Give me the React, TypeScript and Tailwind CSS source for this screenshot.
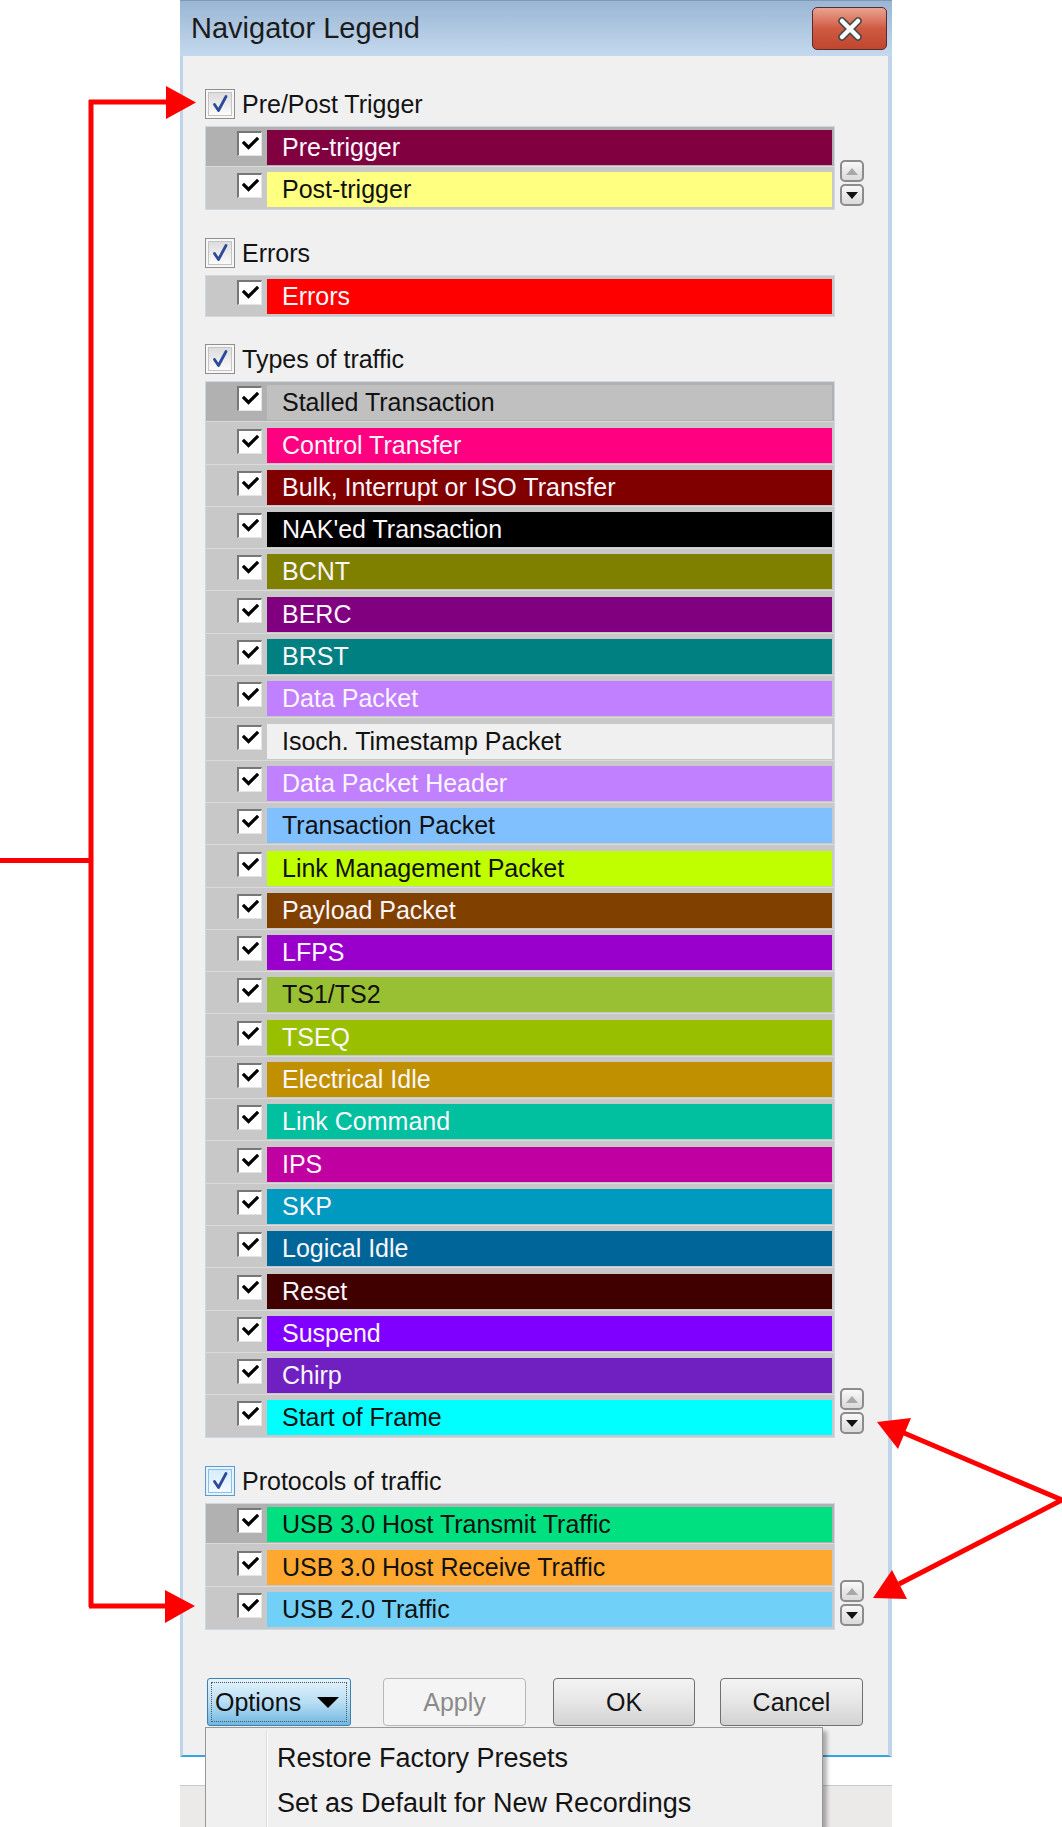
import React from "react";

type Item = { label: string; bg: string; fg: string };

const W = "text-[#fbf6fb]";
const B = "text-[#111111]";

const prePost: Item[] = [
  { label: "Pre-trigger", bg: "bg-[#800040]", fg: W },
  { label: "Post-trigger", bg: "bg-[#ffff80]", fg: B },
];

const errors: Item[] = [{ label: "Errors", bg: "bg-[#ff0000]", fg: W }];

const types: Item[] = [
  { label: "Stalled Transaction", bg: "bg-[#c0c0c0]", fg: B },
  { label: "Control Transfer", bg: "bg-[#ff0080]", fg: W },
  { label: "Bulk, Interrupt or ISO Transfer", bg: "bg-[#800000]", fg: W },
  { label: "NAK'ed Transaction", bg: "bg-[#000000]", fg: W },
  { label: "BCNT", bg: "bg-[#808000]", fg: W },
  { label: "BERC", bg: "bg-[#800080]", fg: W },
  { label: "BRST", bg: "bg-[#008080]", fg: W },
  { label: "Data Packet", bg: "bg-[#c080ff]", fg: W },
  { label: "Isoch. Timestamp Packet", bg: "bg-[#f0f0f0]", fg: B },
  { label: "Data Packet Header", bg: "bg-[#c080ff]", fg: W },
  { label: "Transaction Packet", bg: "bg-[#80c0ff]", fg: B },
  { label: "Link Management Packet", bg: "bg-[#c0ff00]", fg: B },
  { label: "Payload Packet", bg: "bg-[#804000]", fg: W },
  { label: "LFPS", bg: "bg-[#9900cc]", fg: W },
  { label: "TS1/TS2", bg: "bg-[#99c033]", fg: B },
  { label: "TSEQ", bg: "bg-[#99c000]", fg: W },
  { label: "Electrical Idle", bg: "bg-[#c09000]", fg: W },
  { label: "Link Command", bg: "bg-[#00c0a0]", fg: W },
  { label: "IPS", bg: "bg-[#c000a0]", fg: W },
  { label: "SKP", bg: "bg-[#0099c0]", fg: W },
  { label: "Logical Idle", bg: "bg-[#006699]", fg: W },
  { label: "Reset", bg: "bg-[#400000]", fg: W },
  { label: "Suspend", bg: "bg-[#8000ff]", fg: W },
  { label: "Chirp", bg: "bg-[#7020c0]", fg: W },
  { label: "Start of Frame", bg: "bg-[#00ffff]", fg: B },
];

const protocols: Item[] = [
  { label: "USB 3.0 Host Transmit Traffic", bg: "bg-[#00e080]", fg: B },
  { label: "USB 3.0 Host Receive Traffic", bg: "bg-[#ffa830]", fg: B },
  { label: "USB 2.0 Traffic", bg: "bg-[#70d0f8]", fg: B },
];

function SmallCheck() {
  return (
    <div className="ml-[31px] mt-px flex h-[25px] w-[25px] shrink-0 items-start justify-center border-b border-l-2 border-r border-t-2 border-b-[#e4e4e4] border-l-[#777777] border-r-[#e4e4e4] border-t-[#777777] bg-white pt-[4px]">
      <svg width="17" height="13" viewBox="0 0 17 13">
        <path d="M2 6 L6.5 10.5 L15 2" stroke="#000" strokeWidth="3.2" fill="none" strokeLinecap="square" />
      </svg>
    </div>
  );
}

function HeaderCheck({ hover }: { hover?: boolean }) {
  return (
    <div
      className={`flex h-[30px] w-[30px] items-center justify-center border p-[2px] ${
        hover ? "border-[#5b9bd5] bg-[#e8f4fc]" : "border-[#8f8f8f] bg-[#f7f7f7]"
      }`}
    >
      <div
        className={`flex h-full w-full items-center justify-center border bg-linear-to-b ${
          hover ? "border-[#8cc0e8] from-[#d6ecfb] to-[#f4faff]" : "border-[#c4c4c4] from-[#dcdcdc] to-[#fbfbfb]"
        }`}
      >
        <svg width="20" height="20" viewBox="0 0 20 20">
          <path d="M4.5 10.5 L8.5 16.5 L16 2.5" stroke="#2c4a9a" strokeWidth="2.8" fill="none" strokeLinecap="round" strokeLinejoin="round" />
        </svg>
      </div>
    </div>
  );
}

function Row({ item, first, last, dark }: { item: Item; first: boolean; last: boolean; dark: boolean }) {
  return (
    <div className={last ? "h-[40px]" : "h-[42.3px]"}>
      <div className={`flex h-[39px] items-start pt-[3px] ${first && dark ? "bg-[#b1b1b1]" : ""}`}>
        <SmallCheck />
        <div
          className={`ml-[5px] mr-[2px] flex h-[35px] flex-1 items-center pl-[15px] text-[25px] leading-none ${item.bg} ${item.fg}`}
        >
          {item.label}
        </div>
      </div>
      {!last && <div className="h-px bg-[#dadada]" />}
    </div>
  );
}

function Spin() {
  return (
    <div className="mb-[4px] ml-[5px] flex w-[24px] flex-col gap-[2px]">
      <div className="flex h-[22px] w-[24px] items-center justify-center rounded-[5px] border-2 border-[#8c8c8c] bg-linear-to-b from-[#f8f8f8] to-[#dadada]">
        <svg width="12" height="7" viewBox="0 0 12 7">
          <path d="M0 7 L6 0 L12 7 Z" fill="#a8a8a8" />
        </svg>
      </div>
      <div className="flex h-[22px] w-[24px] items-center justify-center rounded-[5px] border-2 border-[#8c8c8c] bg-linear-to-b from-[#f8f8f8] to-[#dadada]">
        <svg width="12" height="7" viewBox="0 0 12 7">
          <path d="M0 0 L12 0 L6 7 Z" fill="#111" />
        </svg>
      </div>
    </div>
  );
}

function Section({
  title,
  items,
  spin,
  dark = true,
  hover,
  className = "",
}: {
  title: string;
  items: Item[];
  spin: boolean;
  dark?: boolean;
  hover?: boolean;
  className?: string;
}) {
  return (
    <div className={`flex flex-col ${className}`}>
      <div className="flex h-[30px] items-center gap-[7px]">
        <HeaderCheck hover={hover} />
        <span className="text-[25px] leading-none text-[#141414]">{title}</span>
      </div>
      <div className="mt-[7px] flex items-end">
        <div className="w-[630px] border border-[#cfd7e0] bg-[#c8c8c8]">
          {items.map((it, i) => (
            <Row key={it.label + i} item={it} first={i === 0} last={i === items.length - 1} dark={dark} />
          ))}
        </div>
        {spin && <Spin />}
      </div>
    </div>
  );
}

function Btn({ label, disabled, className = "" }: { label: string; disabled?: boolean; className?: string }) {
  return (
    <div
      className={`flex h-[48px] items-center justify-center rounded-[4px] border text-[25px] leading-none ${
        disabled
          ? "border-[#b4b8bb] bg-[#f4f4f4] text-[#8a8a8a]"
          : "border-[#707070] bg-linear-to-b from-[#f3f3f3] via-[#e6e6e6] to-[#d2d2d2] text-[#141414]"
      } ${className}`}
    >
      {label}
    </div>
  );
}

export default function App() {
  return (
    <div className="relative h-[1827px] w-[1062px] overflow-hidden bg-white font-['Liberation_Sans',Arial,sans-serif]">
      <div className="ml-[180px] flex w-[712px] flex-col">
        {/* title bar */}
        <div className="flex h-[56px] items-center justify-between border-t border-[#7f98b4] bg-linear-to-b from-[#9ab6d4] to-[#c4d9ee] pl-[11px] pr-[5px]">
          <span className="text-[29px] leading-none text-[#1b1b1b]">Navigator Legend</span>
          <div className="flex h-[43px] w-[75px] items-center justify-center rounded-[5px] border border-[#5a2b2b] bg-linear-to-b from-[#e9a392] via-[#cf5a42] to-[#c0462e]">
            <svg width="30" height="24" viewBox="0 0 30 24">
              <path d="M7 4 L23 20 M23 4 L7 20" stroke="#4a4a4a" strokeWidth="7.5" strokeLinecap="round" />
              <path d="M7 4 L23 20 M23 4 L7 20" stroke="#ffffff" strokeWidth="4.5" strokeLinecap="round" />
            </svg>
          </div>
        </div>
        {/* content */}
        <div className="flex h-[1701px] flex-col border-b-2 border-l-[3px] border-r-[4px] border-b-[#35a6df] border-l-[#bfd4ea] border-r-[#bfd4ea] bg-[#f0f0f0] pl-[22px] pt-[33px]">
          <Section title="Pre/Post Trigger" items={prePost} spin />
          <Section title="Errors" items={errors} spin={false} dark={false} className="mt-[28px]" />
          <Section title="Types of traffic" items={types} spin className="mt-[27px]" />
          <Section title="Protocols of traffic" items={protocols} spin hover className="mt-[28px]" />
          <div className="mt-[48px] flex">
            <div className="relative ml-[2px] flex h-[48px] w-[144px] items-center rounded-[3px] border border-[#3c7fb1] bg-linear-to-b from-[#e4f3fc] via-[#b9def4] to-[#6fb8e2] pl-[7px] text-[25px] leading-none text-[#101010]">
              <div className="absolute inset-[3px] border border-dotted border-[#555]" />
              <span>Options</span>
              <svg className="ml-[16px]" width="22" height="11" viewBox="0 0 22 11">
                <path d="M0 0 L22 0 L11 11 Z" fill="#000" />
              </svg>
            </div>
            <Btn label="Apply" disabled className="ml-[32px] w-[143px]" />
            <Btn label="OK" className="ml-[27px] w-[142px]" />
            <Btn label="Cancel" className="ml-[25px] w-[143px]" />
          </div>
        </div>
        {/* window underneath */}
        <div className="h-[28px] bg-white" />
        <div className="h-px bg-[#c9c9c9]" />
        <div className="h-[41px] bg-[#ece9e9]" />
      </div>

      {/* dropdown menu */}
      <div className="absolute left-[205px] top-[1727px] h-[110px] w-[618px] border border-[#979797] bg-[#f0f0f0] shadow-[4px_4px_4px_rgba(0,0,0,0.3)]">
        <div className="absolute bottom-0 left-[60px] top-[2px] w-[2px] border-l border-r border-l-[#dcdcdc] border-r-white" />
        <div className="flex flex-col pt-[8px]">
          <div className="flex h-[45px] items-center pl-[71px] text-[27px] leading-none text-[#141414]">Restore Factory Presets</div>
          <div className="flex h-[45px] items-center pl-[71px] text-[27px] leading-none text-[#141414]">Set as Default for New Recordings</div>
        </div>
      </div>

      {/* red annotations */}
      <svg className="pointer-events-none absolute left-0 top-0" width="1062" height="1827" viewBox="0 0 1062 1827">
        <g stroke="#ff0000" strokeWidth="5" fill="none">
          <path d="M91 100 V1607" />
          <path d="M89 102 H170" />
          <path d="M89 1606 H170" />
          <path d="M0 860.5 H91" />
          <path d="M1062 1500 L904 1433" />
          <path d="M1062 1500 L899 1584" />
        </g>
        <g fill="#ff0000">
          <polygon points="166,86 196,102.5 166,119" />
          <polygon points="165,1590 195,1606 165,1623" />
          <polygon points="877,1422 911,1418 898,1449" />
          <polygon points="873,1598 907,1599 892,1570" />
        </g>
      </svg>
    </div>
  );
}
